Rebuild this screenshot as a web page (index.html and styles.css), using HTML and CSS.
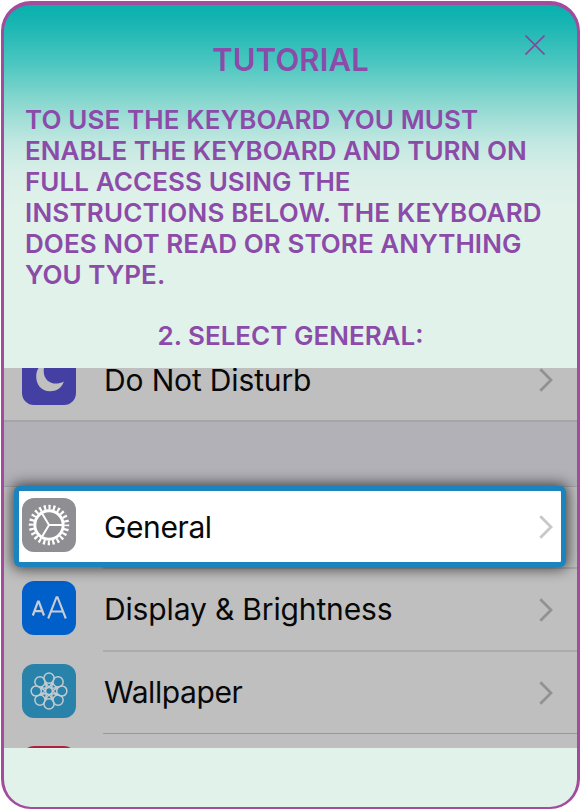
FILE: index.html
```html
<!DOCTYPE html>
<html lang="en">
<head>
<meta charset="utf-8">
<title>Tutorial</title>
<link rel="stylesheet" href="styles.css">
</head>
<body>
<main class="panel">
  <header class="header">
    <h1 class="title">TUTORIAL</h1>
    <svg class="close" viewBox="0 0 20 20"><path d="M.5 .5 19.5 19.5M19.5 .5 .5 19.5"/></svg>
  </header>
  <p class="intro">
    <span class="l1">TO USE THE KEYBOARD YOU MUST</span>
    <span class="l2">ENABLE THE KEYBOARD AND TURN ON</span>
    <span class="l3">FULL ACCESS USING THE</span>
    <span class="l4">INSTRUCTIONS BELOW. THE KEYBOARD</span>
    <span class="l5">DOES NOT READ OR STORE ANYTHING</span>
    <span class="l6">YOU TYPE.</span>
  </p>
  <h2 class="step"><span>2. SELECT GENERAL:</span></h2>
  <section class="settings">
    <div class="row row-first">
      <svg class="icon" viewBox="0 0 54 54"><rect width="54" height="54" rx="12" fill="#443fa3"/><path d="M22.500 12C10 16.500 11.500 40.200 28 40.200C36 40.200 40.500 35.500 41.800 30.500C33 35.500 21.700 31.500 21.700 20C21.700 17 22.500 14 24 11Z" fill="#c0c0c0"/></svg>
      <span class="label dnd">Do Not Disturb</span>
      <svg class="chevron" viewBox="0 0 14 24"><path d="M1.300 1.300 12 12 1.300 22.700"/></svg>
    </div>
    <div class="gap"></div>
    <div class="row row-general">
      <svg class="icon" viewBox="0 0 54 54"><rect width="54" height="54" rx="12" fill="#8e8e93"/>
        <g fill="none" stroke="#fff"><circle cx="27" cy="27" r="17.800" stroke-width="4.800" stroke-dasharray="2.200 2.460" stroke-dashoffset="1.100"/><circle cx="27" cy="27" r="14.200" stroke-width="3"/><path d="M27 27H41M27 27 19.500 14.500M27 27 19.500 39.500" stroke-width="2"/></g></svg>
      <span class="label general">General</span>
      <svg class="chevron" viewBox="0 0 14 24"><path d="M1.300 1.300 12 12 1.300 22.700"/></svg>
    </div>
    <div class="row">
      <svg class="icon" viewBox="0 0 54 54"><rect width="54" height="54" rx="12" fill="#005fc9"/><g fill="none" stroke="#c8cdd5"><path d="M10.800 34.500 16 20.700H16.800L22 34.500M12.300 30.200H20.500" stroke-width="2.200"/><path d="M26.200 37.500 34.500 16.200H35.500L43.800 37.500M29 30.500H41" stroke-width="2.100"/></g></svg>
      <span class="label display">Display &amp; Brightness</span>
      <svg class="chevron" viewBox="0 0 14 24"><path d="M1.300 1.300 12 12 1.300 22.700"/></svg>
    </div>
    <div class="row row-wallpaper">
      <svg class="icon" viewBox="0 0 54 54"><rect width="54" height="54" rx="12" fill="#2882a9"/>
        <defs><g id="petal"><circle cx="27" cy="14.200" r="5.100"/><path d="M27 23.400C25.300 21.500 24.300 20 24 18.300M27 23.400C28.700 21.500 29.700 20 30 18.300"/></g></defs>
        <g fill="none" stroke="#c3cbd0" stroke-width="1.500"><use href="#petal"/><use href="#petal" transform="rotate(45 27 27)"/><use href="#petal" transform="rotate(90 27 27)"/><use href="#petal" transform="rotate(135 27 27)"/><use href="#petal" transform="rotate(180 27 27)"/><use href="#petal" transform="rotate(225 27 27)"/><use href="#petal" transform="rotate(270 27 27)"/><use href="#petal" transform="rotate(315 27 27)"/><circle cx="27" cy="27" r="3.400"/></g></svg>
      <span class="label wallpaper">Wallpaper</span>
      <svg class="chevron" viewBox="0 0 14 24"><path d="M1.300 1.300 12 12 1.300 22.700"/></svg>
    </div>
    <div class="row row-last">
      <svg class="icon" viewBox="0 0 54 54"><rect width="54" height="54" rx="12" fill="#b0203c"/></svg>
    </div>
  </section>
</main>
</body>
</html>
```

FILE: styles.css
```css
*, *::before, *::after { box-sizing: border-box; }
body {
  margin: 0;
  background: #fff;
  font-family: Inter, "Liberation Sans", sans-serif;
}
.panel {
  width: 579px;
  height: 808px;
  margin: 1px 0 0 1px;
  border: 3px solid #a54b9d;
  border-top-width: 4px;
  border-bottom-width: 2px;
  border-radius: 30px;
  overflow: hidden;
  background: linear-gradient(#08b0ae 0, #18b5b2 18px, #4ec7c1 60px, #8bd8d0 98px, #c2e8e1 138px, #d9eee8 168px, #e1f2eb 205px);
  color: #8c4ba8;
}
.header {
  position: relative;
  height: 99px;
  padding-top: 34px;
}
.title {
  margin: 0;
  font-size: 31px;
  line-height: 42px;
  font-weight: 560;
  letter-spacing: .15px;
  text-align: center;
}
.close {
  position: absolute;
  top: 30px;
  right: 32px;
  width: 20px;
  height: 20px;
  fill: none;
  stroke: #824a98;
  stroke-width: 1.6;
}
.intro {
  height: 186px;
  margin: 0 0 0 21px;
  font-size: 26px;
  line-height: 31px;
  font-weight: 560;
}
.intro span {
  display: block;
  white-space: nowrap;
}
.l1 { letter-spacing: .11px; }
.l2 { letter-spacing: .04px; }
.l3 { letter-spacing: .08px; }
.l4 { letter-spacing: .19px; }
.l5 { letter-spacing: .08px; }
.l6 { letter-spacing: .02px; }
.step {
  height: 78px;
  margin: 0;
  padding-top: 30px;
  font-size: 26px;
  line-height: 31px;
  font-weight: 560;
  text-align: center;
}
.settings {
  height: 380px;
  overflow: hidden;
  background: #bfbfbf;
  color: #080808;
}
.row {
  display: flex;
  align-items: center;
  position: relative;
  height: 83px;
  padding: 0 24px 2px 18px;
}
.row::after {
  content: "";
  position: absolute;
  left: 99px;
  right: 0;
  bottom: 0;
  height: 2px;
  background: #ababab;
}
.row-wallpaper::after {
  bottom: 1px;
  height: 1px;
  background: #989898;
}
.row-first {
  height: 54px;
  padding-bottom: 0;
  align-items: flex-end;
}
.row-first::after { left: 0; background: #a5a5a7; }
.gap {
  height: 65px;
  background: #b2b1b7;
  border-bottom: 1px solid #a3a3a6;
}
.row-general { height: 82px; z-index: 1; }
.row-general::after { z-index: -1; }
.row-general::before {
  content: "";
  position: absolute;
  top: -1.5px;
  left: 10px;
  width: 552px;
  height: 81px;
  border: 5px solid #1b84bf;
  border-radius: 6px;
  background: #fff;
  box-shadow: 0 0 14px 2px rgba(0, 0, 0, .65);
}
.row-last {
  align-items: flex-start;
  padding-top: 11px;
}
.row-last::after { display: none; }
.icon {
  position: relative;
  flex: none;
  width: 54px;
  height: 54px;
  margin-bottom: 4px;
}
.label {
  position: relative;
  margin: 0 0 2px 28px;
  font-size: 30px;
  line-height: 38px;
  letter-spacing: -.15px;
  white-space: nowrap;
}
.general { margin-bottom: 0; letter-spacing: -.4px; }
.wallpaper { letter-spacing: -.4px; }
.chevron {
  position: relative;
  flex: none;
  width: 14px;
  height: 24px;
  margin-left: auto;
  fill: none;
  stroke: #929294;
  stroke-width: 2.8;
}
.row-general .chevron { stroke: #c7c7cc; }
.row-first .icon { margin-bottom: 17px; }
.row-first .label { margin-bottom: 23px; }
.row-first .chevron { margin-bottom: 30px; }
```
